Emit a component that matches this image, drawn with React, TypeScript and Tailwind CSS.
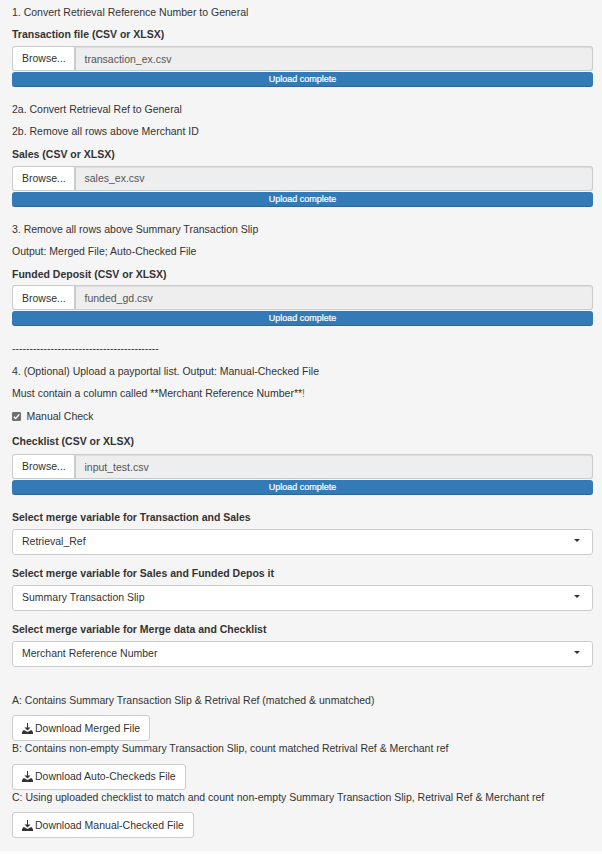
import type { ReactNode } from "react";

function P({ children, className = "" }: { children: ReactNode; className?: string }) {
  return <p className={`h-[15px] whitespace-nowrap leading-[15px] ${className}`}>{children}</p>;
}

function Upload({
  file,
  className = "mt-1",
  browseLeading = "leading-[22px]",
  fileLeading = "leading-[24px]",
}: {
  file: string;
  className?: string;
  browseLeading?: string;
  fileLeading?: string;
}) {
  return (
    <div className={className}>
      <div className="flex h-[25px]">
        <div className={`w-[62px] rounded-l-[3px] border border-r-0 border-[#ccc] bg-white pl-[9px] ${browseLeading}`}>
          Browse...
        </div>
        <div
          className={`flex-1 rounded-r-[3px] border border-l-2 border-[#ccc] bg-[#eee] pl-[8.5px] text-[#555] shadow-[inset_0_1px_1px_rgba(0,0,0,0.075)] ${fileLeading}`}
        >
          {file}
        </div>
      </div>
      <div className="mt-px h-[15px] rounded-[3px] bg-[#337ab7] text-center text-[9px] leading-[15px] text-white shadow-[inset_0_-1px_0_rgba(0,0,0,0.15)] [-webkit-text-stroke:0.2px_white]">
        Upload complete
      </div>
    </div>
  );
}

function Select({ value }: { value: string }) {
  return (
    <div className="mt-1 flex h-[26px] items-start justify-between rounded-[3px] border border-[#ccc] bg-white pr-3 pl-[9px]">
      <span className="leading-[22px]">{value}</span>
      <span className="mt-[9px] h-0 w-0 border-x-[3px] border-t-[3px] border-x-transparent border-t-[#333]" />
    </div>
  );
}

function Download({ label, className }: { label: string; className: string }) {
  return (
    <button
      className={`flex h-[26px] items-center gap-[2px] rounded-[3px] border border-[#ccc] bg-white pl-[9px] whitespace-nowrap ${className}`}
    >
      <svg className="-mt-px" width="11" height="11" viewBox="0 0 11 11" fill="#333">
        <path d="M5 0h1v4.6h2.6L5.5 7.5 2.4 4.6H5z" />
        <path d="M1.2 7.2h1.2L5.5 9l3.1-1.8h1.2L11 9.2V11H0V9.2z" />
      </svg>
      <span>{label}</span>
    </button>
  );
}

export default function App() {
  return (
    <div className="h-[854px] bg-[#fcfcfc] font-['Liberation_Sans',Arial,sans-serif] text-[10.5px] text-[#333]">
      <main className="h-[851px] bg-[#f5f5f5] pt-[5px] pr-[9px] pl-3">
        <P>1. Convert Retrieval Reference Number to General</P>
        <P className="mt-[7px] font-bold">Transaction file (CSV or XLSX)</P>
        <Upload file="transaction_ex.csv" />
        <P className="mt-[15px]">2a. Convert Retrieval Ref to General</P>
        <P className="mt-[7px]">2b. Remove all rows above Merchant ID</P>
        <P className="mt-2 font-bold">Sales (CSV or XLSX)</P>
        <Upload file="sales_ex.csv" fileLeading="leading-[22px]" />
        <P className="mt-[15px]">3. Remove all rows above Summary Transaction Slip</P>
        <P className="mt-[7px]">Output: Merged File; Auto-Checked File</P>
        <P className="mt-2 font-bold">Funded Deposit (CSV or XLSX)</P>
        <Upload file="funded_gd.csv" className="mt-[3px]" browseLeading="leading-[24px]" />
        <P className="mt-[15px]">------------------------------------------</P>
        <P className="mt-2">4. (Optional) Upload a payportal list. Output: Manual-Checked File</P>
        <P className="mt-[7px]">
          Must contain a column called **Merchant Reference Number**<span className="text-[#a65a2a]">!</span>
        </P>
        <label className="mt-2 flex h-[15px] items-center gap-[5.5px] leading-[15px]">
          <svg width="9" height="9" viewBox="0 0 9 9">
            <rect width="9" height="9" rx="1.2" fill="#707070" />
            <path d="M1.8 4.7 3.7 6.5 7.3 2.4" fill="none" stroke="#fff" strokeWidth="1.4" />
          </svg>
          Manual Check
        </label>
        <P className="mt-[10px] font-bold">Checklist (CSV or XLSX)</P>
        <Upload file="input_test.csv" className="mt-[5px]" />
        <P className="mt-[15px] font-bold">Select merge variable for Transaction and Sales</P>
        <Select value="Retrieval_Ref" />
        <P className="mt-[11px] font-bold">Select merge variable for Sales and Funded Depos it</P>
        <Select value="Summary Transaction Slip" />
        <P className="mt-[11px] font-bold">Select merge variable for Merge data and Checklist</P>
        <Select value="Merchant Reference Number" />
        <P className="mt-[26px]">A: Contains Summary Transaction Slip &amp; Retrival Ref (matched &amp; unmatched)</P>
        <Download label="Download Merged File" className="mt-[7px] w-[138px] pt-px" />
        <P>B: Contains non-empty Summary Transaction Slip, count matched Retrival Ref &amp; Merchant ref</P>
        <Download label="Download Auto-Checkeds File" className="mt-2 w-[174px]" />
        <P>C: Using uploaded checklist to match and count non-empty Summary Transaction Slip, Retrival Ref &amp; Merchant ref</P>
        <Download label="Download Manual-Checked File" className="mt-[7px] w-[182px] pt-px" />
      </main>
    </div>
  );
}
